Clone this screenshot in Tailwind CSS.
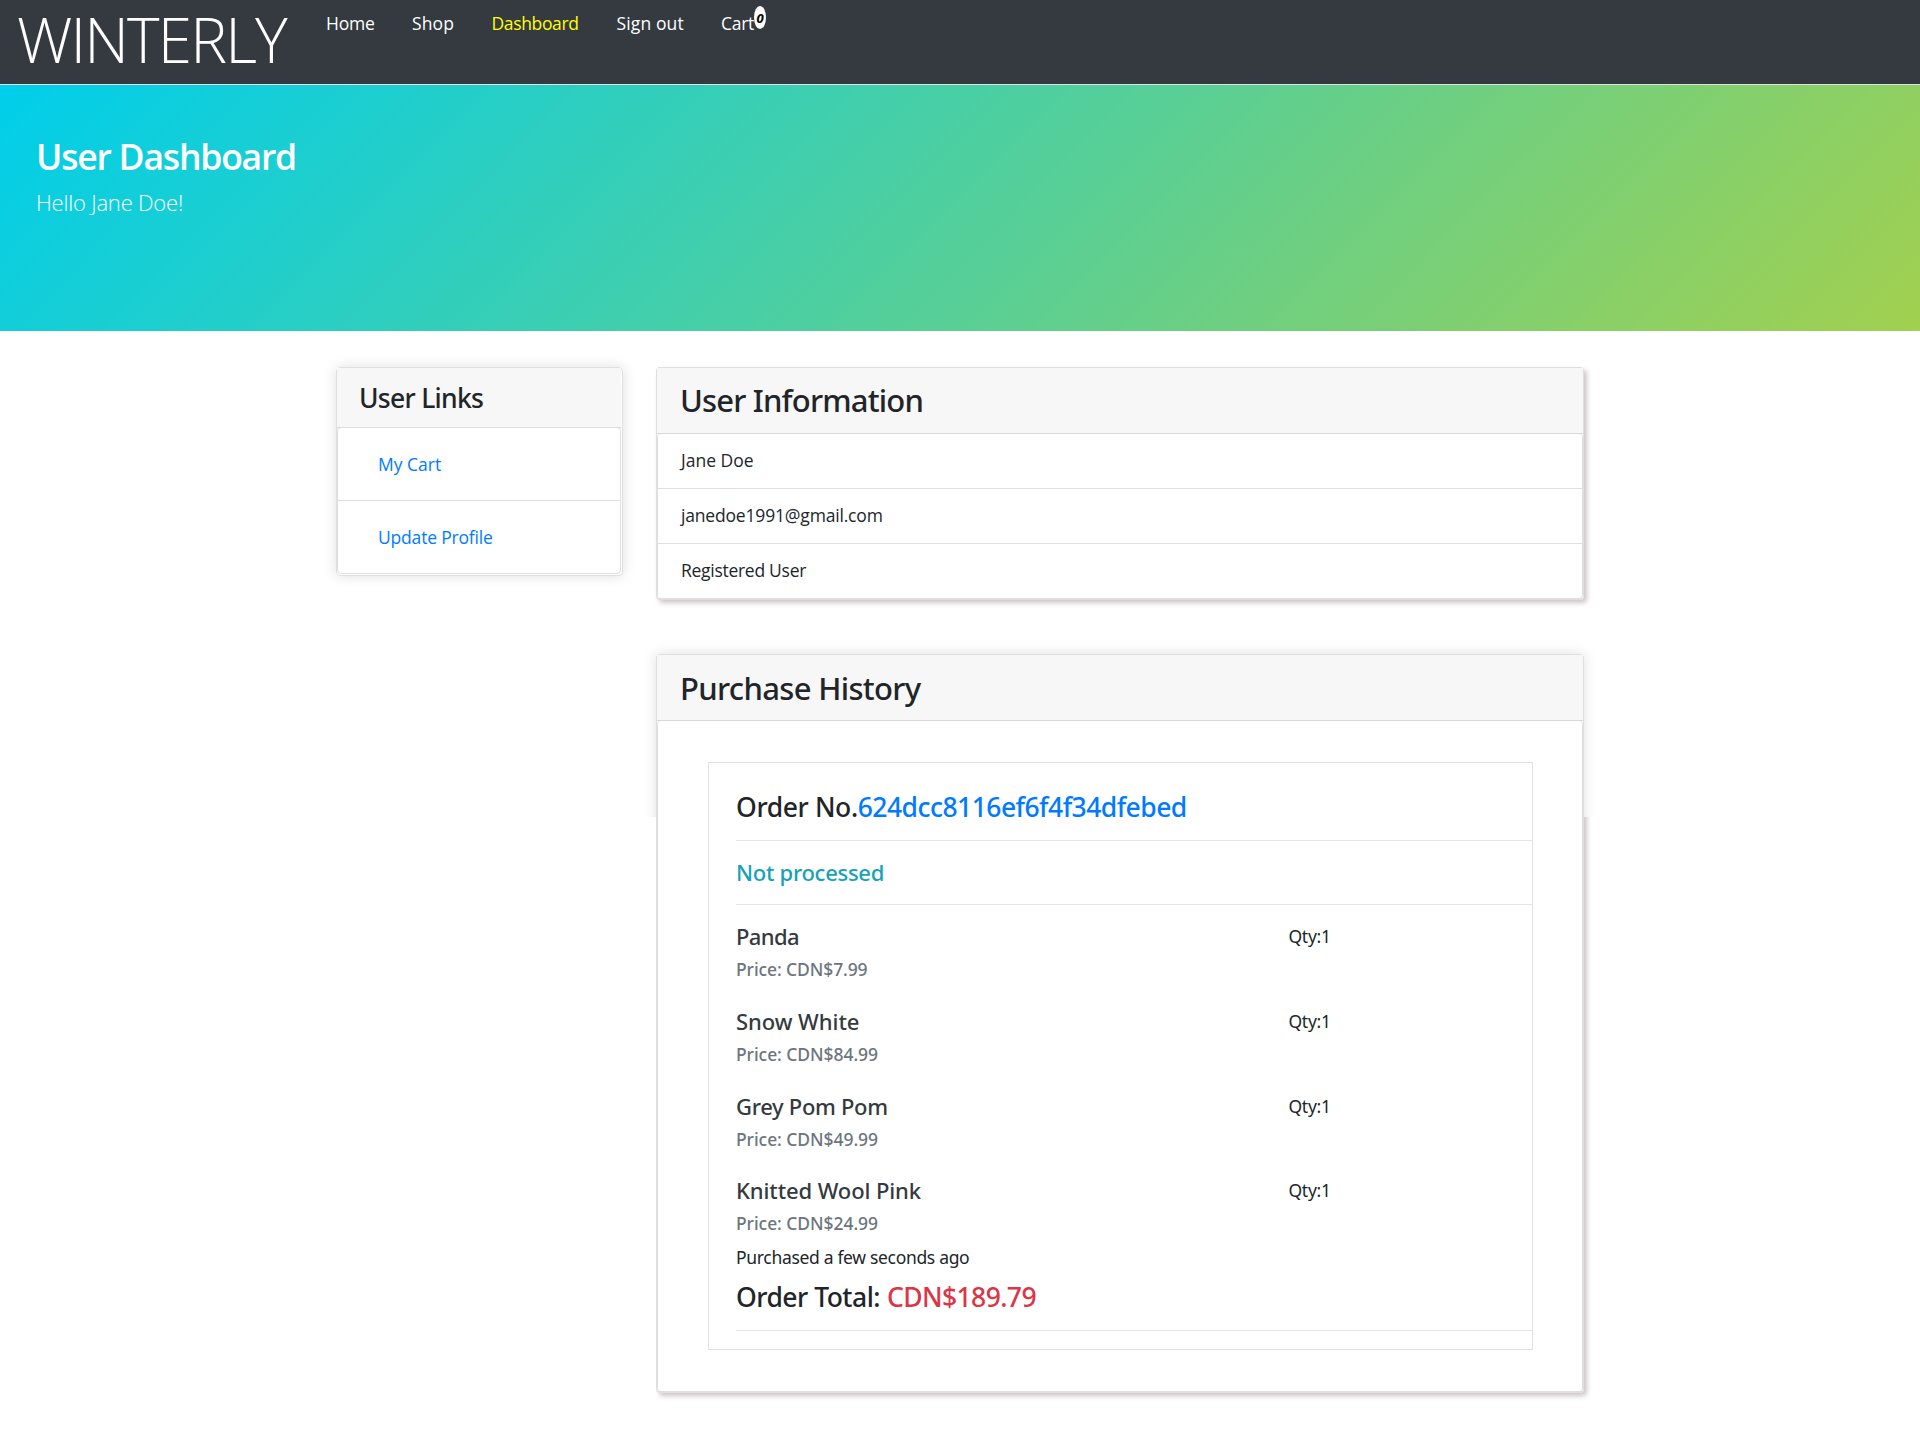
<!DOCTYPE html>
<html lang="en">
<head>
<meta charset="utf-8">
<title>Winterly</title>
<script src="https://cdn.jsdelivr.net/npm/@tailwindcss/browser@4"></script>
</head>
<body class="min-h-[1446px] bg-white text-[#212529] font-['Open_Sans',sans-serif] text-[17.5px] leading-[27px]">
<header class="flex items-start h-[85px] bg-[#343a40] border-b border-[#dee2e6] text-white whitespace-nowrap">
  <div class="pl-[17px] w-[326px] pt-px text-[62px] leading-[77px] font-light tracking-[-1.85px]">WINTERLY</div>
  <nav class="flex pt-[10px]">
    <a class="w-[86px] tracking-[-0.2px]">Home</a>
    <a class="w-[79.5px] tracking-[0.1px]">Shop</a>
    <a class="w-[125px] text-[#ffff00] tracking-[-0.36px]">Dashboard</a>
    <a class="w-[104.5px] tracking-[0.12px]">Sign out</a>
    <a class="relative w-[50px] tracking-[-0.28px]">Cart<sup class="absolute left-[33px] top-[-4px] w-[12px] h-[23px] rounded-[50%] bg-white text-black text-[13px] leading-[25px] font-bold italic text-center">0</sup></a>
  </nav>
</header>
<section class="h-[246px] pl-[36px] pt-[50px] text-white bg-[linear-gradient(135deg,#00ceeb,#a2d04f)]">
  <h1 class="text-[35.5px] leading-[43px] font-semibold tracking-[-1.206px]">User Dashboard</h1>
  <p class="mt-[7px] text-[22px] leading-[34px] font-light tracking-[-0.21px]">Hello Jane Doe!</p>
</section>
<main class="flex items-start gap-[33px] pl-[336px] pt-[36px]">
  <aside class="w-[287px] h-[209px] rounded border border-[#dfdfdf] shadow-[0_0_14px_rgba(0,0,0,0.13)] pr-px">
    <h4 class="h-[60px] pl-[22px] pt-[14px] bg-[#f7f7f7] border-b border-[#d8d8d8] text-[26.5px] leading-[32px] font-['Noto_Sans',sans-serif] font-medium tracking-[-0.72px]">User Links</h4>
    <ul class="-mt-px border border-[#dfdfdf] rounded text-[#007bff]">
      <li class="h-[73px] pl-[40px] pt-[23px] border-b border-[#dfdfdf]">My Cart</li>
      <li class="h-[72px] pl-[40px] pt-[23px] tracking-[-0.19px]">Update Profile</li>
    </ul>
  </aside>
  <div class="w-[928px]">
    <section class="h-[233px] rounded border border-[#dfdfdf] border-b-2 shadow-[3px_3px_5px_#cec5c5]">
      <h3 class="h-[66px] pl-[23px] pt-[13px] bg-[#f7f7f7] border-b border-[#d8d8d8] text-[31px] leading-[38px] font-['Noto_Sans',sans-serif] font-medium tracking-[-0.82px]">User Information</h3>
      <ul class="border-x border-[#dfdfdf] rounded bg-white">
        <li class="h-[55px] pl-[23px] pt-[13px] border-b border-[#dfdfdf]">Jane Doe</li>
        <li class="h-[55px] pl-[23px] pt-[13px] border-b border-[#dfdfdf] tracking-[-0.18px]">janedoe1991@gmail.com</li>
        <li class="h-[54px] pl-[23px] pt-[13px] tracking-[-0.28px]">Registered User</li>
      </ul>
    </section>
    <section class="relative mt-[54px]">
      <!-- soft halo behind the upper part of the card, offset shadow behind the rest -->
      <div class="absolute -inset-x-5 -top-5 h-[183px] overflow-hidden"><div class="mx-5 mt-5 h-[300px] rounded shadow-[0_0_14px_rgba(0,0,0,0.13)]"></div></div>
      <div class="absolute left-0 -right-5 top-[163px] h-[596px] overflow-hidden"><div class="mr-5 -mt-5 h-[596px] rounded-b shadow-[3px_3px_5px_#cec5c5]"></div></div>
      <div class="relative h-[739px] rounded border border-[#dfdfdf] border-b-2 bg-white">
        <h3 class="h-[66px] pl-[23px] pt-[14px] bg-[#f7f7f7] border-b border-[#d8d8d8] text-[31px] leading-[38px] font-['Noto_Sans',sans-serif] font-medium tracking-[-0.66px]">Purchase History</h3>
        <div class="h-[670px] pt-[41px] pl-[50px] pr-[49px] border-x border-[#dfdfdf] rounded">
          <article class="h-[588px] pl-[27px] pt-[28px] border border-[#dee2e6] font-['Noto_Sans',sans-serif]">
            <h4 class="pb-[17px] border-b border-[#e5e5e5] text-[26.5px] leading-[32px] font-medium tracking-[-0.38px]">Order No.<a class="text-[#007bff] tracking-[-0.54px]">624dcc8116ef6f4f34dfebed</a></h4>
            <h5 class="py-[18px] border-b border-[#e5e5e5] text-[22px] leading-[27px] font-medium text-[#17a2b8] tracking-[-0.285px]">Not processed</h5>
            <div class="flex flex-col gap-[28px] pt-[18px]">
              <div class="flex h-[57px]"><div class="w-[552.5px]"><h5 class="text-[22px] leading-[27px] font-medium text-[#343a40] tracking-[-0.6px]">Panda</h5><h6 class="mt-[8px] leading-[22px] font-medium text-[#6c757d] tracking-[-0.1px]">Price: CDN$7.99</h6></div><p class="tracking-[-0.3px]">Qty:1</p></div>
              <div class="flex h-[57px]"><div class="w-[552.5px]"><h5 class="text-[22px] leading-[27px] font-medium text-[#343a40] tracking-[-0.05px]">Snow White</h5><h6 class="mt-[8px] leading-[22px] font-medium text-[#6c757d] tracking-[-0.065px]">Price: CDN$84.99</h6></div><p class="tracking-[-0.3px]">Qty:1</p></div>
              <div class="flex h-[57px]"><div class="w-[552.5px]"><h5 class="text-[22px] leading-[27px] font-medium text-[#343a40] tracking-[-0.32px]">Grey Pom Pom</h5><h6 class="mt-[8px] leading-[22px] font-medium text-[#6c757d] tracking-[-0.065px]">Price: CDN$49.99</h6></div><p class="tracking-[-0.3px]">Qty:1</p></div>
              <div class="-mt-px flex h-[57px]"><div class="w-[552.5px]"><h5 class="text-[22px] leading-[27px] font-medium text-[#343a40] tracking-[-0.103px]">Knitted Wool Pink</h5><h6 class="mt-[8px] leading-[22px] font-medium text-[#6c757d] tracking-[-0.065px]">Price: CDN$24.99</h6></div><p class="tracking-[-0.3px]">Qty:1</p></div>
            </div>
            <p class="mt-[10px] tracking-[-0.32px]">Purchased a few seconds ago</p>
            <h4 class="mt-[10px] flex gap-[7px] pb-[17px] border-b border-[#e5e5e5] text-[26.5px] leading-[32px] font-medium tracking-[-0.509px]"><span>Order Total:</span><span class="text-[#dc3545] tracking-[-0.592px]">CDN$189.79</span></h4>
          </article>
        </div>
      </div>
    </section>
  </div>
</main>
</body>
</html>
